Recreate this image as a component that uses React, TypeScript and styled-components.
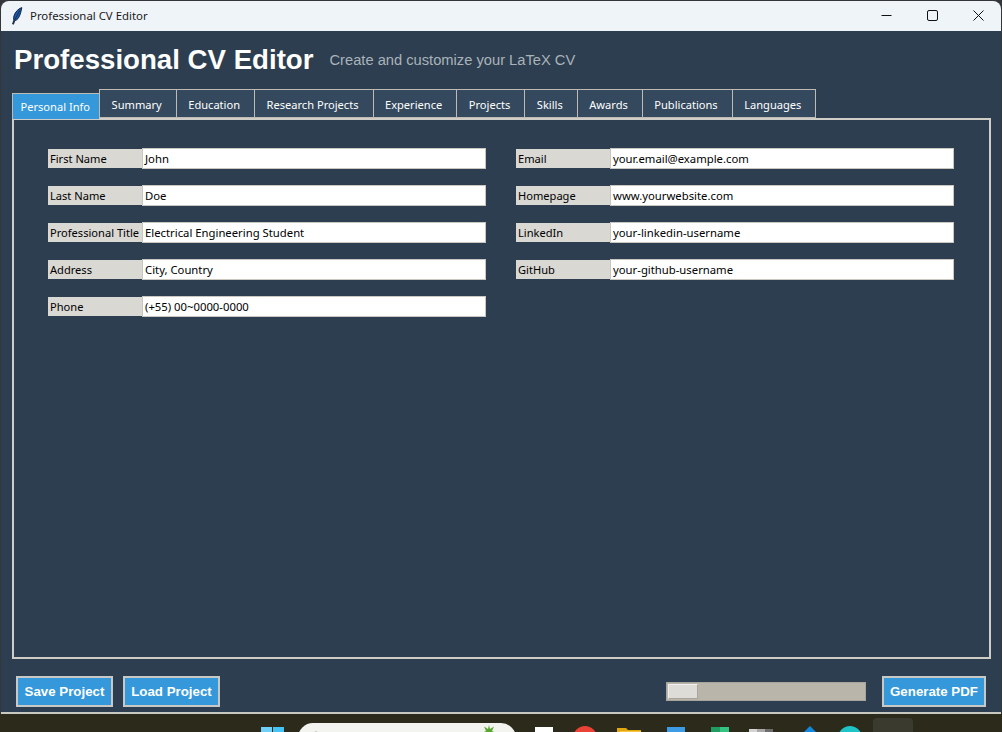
import styled, { createGlobalStyle } from "styled-components"

const GlobalStyle = createGlobalStyle`
  html, body {
    margin: 0;
    padding: 0;
    background: #35363a;
  }
`

const tabNames = [
  "Personal Info",
  "Summary",
  "Education",
  "Research Projects",
  "Experience",
  "Projects",
  "Skills",
  "Awards",
  "Publications",
  "Languages",
]

const leftFields = [
  { label: "First Name", value: "John" },
  { label: "Last Name", value: "Doe" },
  { label: "Professional Title", value: "Electrical Engineering Student" },
  { label: "Address", value: "City, Country" },
  { label: "Phone", value: "(+55) 00~0000-0000" },
]

const rightFields = [
  { label: "Email", value: "your.email@example.com" },
  { label: "Homepage", value: "www.yourwebsite.com" },
  { label: "LinkedIn", value: "your-linkedin-username" },
  { label: "GitHub", value: "your-github-username" },
]

const Desktop = styled.div`
  width: 1002px;
  height: 732px;
  overflow: hidden;
  display: flex;
  flex-direction: column;
  background: #35363a;
`

const Window = styled.div`
  width: 1000px;
  height: 713px;
  margin: 1px 0 0 1px;
  flex: none;
  display: flex;
  flex-direction: column;
  border-radius: 8px 8px 0 0;
  overflow: hidden;
  background: #2c3e50;
  border-bottom: 2px solid #c8c8c0;
  box-sizing: border-box;
`

const TitleBar = styled.div`
  height: 30px;
  flex: none;
  display: flex;
  align-items: center;
  background: #eff4f9;
`

const AppIcon = styled.svg`
  width: 14px;
  height: 18px;
  margin-left: 9px;
  margin-right: 6px;
`

const WindowTitle = styled.span`
  flex: 1;
  padding-bottom: 1px;
  font-family: "Noto Sans", sans-serif;
  font-size: 11.4px;
  color: #1a1a1a;
`

const WindowControl = styled.div`
  width: 46px;
  height: 30px;
  padding-bottom: 2px;
  box-sizing: border-box;
  display: flex;
  align-items: center;
  justify-content: center;
`

const Content = styled.div`
  flex: 1;
  display: flex;
  flex-direction: column;
  padding: 0 10px 0 11px;
  min-height: 0;
`

const Header = styled.div`
  height: 58px;
  display: flex;
  align-items: center;
  padding: 0 2px;
  flex: none;
`

const AppTitle = styled.h1`
  margin: 0;
  font-family: "Liberation Sans", Arial, sans-serif;
  font-size: 27.65px;
  font-weight: bold;
  color: #ffffff;
`

const Subtitle = styled.span`
  margin-left: 16px;
  font-family: "Liberation Sans", Arial, sans-serif;
  font-size: 14.7px;
  color: #aab3b9;
`

const TabStrip = styled.div`
  display: flex;
  align-items: flex-end;
  height: 30px;
  margin-bottom: -1px;
  flex: none;
  position: relative;
  z-index: 1;
`

const Tab = styled.div<{ $active?: boolean }>`
  box-sizing: border-box;
  height: ${(props) => (props.$active ? "26px" : "29px")};
  margin-bottom: ${(props) => (props.$active ? "0" : "1px")};
  padding: ${(props) => (props.$active ? "0 9px 0 7.5px" : "1.5px 14px 0 11.5px")};
  display: flex;
  align-items: center;
  justify-content: center;
  font-family: "Noto Sans", sans-serif;
  font-size: 11.1px;
  color: #ffffff;
  background: ${(props) => (props.$active ? "#3498db" : "#34495e")};
  border: 1px solid #bdbbb3;
  border-bottom: ${(props) => (props.$active ? "none" : "1px solid #bdbbb3")};
  border-right: ${(props) => (props.$active ? "none" : "1px solid #bdbbb3")};
  margin-left: ${(props) => (props.$active ? "0" : "-1px")};
  &:nth-child(2) {
    margin-left: 0;
  }
`

const Panel = styled.div`
  height: 541px;
  flex: none;
  box-sizing: border-box;
  border: 2px solid #cfcdc6;
  padding: 28px 34px;
  display: flex;
  gap: 30px;
  align-items: flex-start;
`

const Column = styled.div`
  width: 438px;
  display: flex;
  flex-direction: column;
  gap: 16px;
  flex: none;
`

const FieldRow = styled.div`
  display: flex;
  height: 21px;
`

const FieldLabel = styled.div`
  width: 94px;
  margin: 1px 0;
  flex: none;
  box-sizing: border-box;
  padding-left: 2px;
  display: flex;
  align-items: center;
  background: #d9d8d3;
  font-family: "Noto Sans", sans-serif;
  font-size: 11.1px;
  color: #000000;
  white-space: nowrap;
`

const FieldInput = styled.div`
  flex: 1;
  box-sizing: border-box;
  padding-left: 2px;
  display: flex;
  align-items: center;
  background: #ffffff;
  border: 1px solid #c9c7c0;
  font-family: "Noto Sans", sans-serif;
  font-size: 11.3px;
  color: #000000;
  white-space: nowrap;
`

const Footer = styled.div`
  flex: 1;
  display: flex;
  align-items: flex-start;
  padding: 17px 5px 0 4px;
  min-height: 0;
`

const ActionButton = styled.div<{ $width: number }>`
  box-sizing: border-box;
  height: 31px;
  width: ${(props) => props.$width}px;
  display: flex;
  align-items: center;
  justify-content: center;
  font-family: "Liberation Sans", Arial, sans-serif;
  font-size: 13.3px;
  font-weight: bold;
  color: #ffffff;
  background: #3498db;
  border: 2px solid #c8c8c4;
  margin-right: 10px;
  white-space: nowrap;
`

const Spacer = styled.div`
  flex: 1;
`

const ProgressTrack = styled.div`
  width: 200px;
  height: 19px;
  margin: 6px 16px 0 0;
  box-sizing: border-box;
  border: 1px solid #a8a59c;
  background: #b9b5aa;
  padding: 1px;
  display: flex;
`

const ProgressThumb = styled.div`
  width: 30px;
  box-sizing: border-box;
  background: #dddcd7;
  border: 1px solid #a8a59c;
  border-top-color: #f0efec;
  border-left-color: #f0efec;
`

const GenerateButton = styled(ActionButton)`
  margin-right: 0;
`

const Taskbar = styled.div`
  flex: 1;
  display: flex;
  align-items: flex-start;
  padding-left: 261px;
  overflow: hidden;
  background: #2c2a1a;
`

const TaskIcon = styled.svg<{ $gap: number; $top: number }>`
  flex: none;
  margin-left: ${(props) => props.$gap}px;
  margin-top: ${(props) => props.$top}px;
`

const SearchBox = styled.div`
  flex: none;
  width: 218px;
  height: 30px;
  margin: 9px 0 0 14px;
  box-sizing: border-box;
  padding: 2px 20px 0 11px;
  display: flex;
  justify-content: space-between;
  border-radius: 15px;
  background: #f3f3f0;
`

const ActiveSlot = styled.div`
  flex: none;
  width: 40px;
  height: 30px;
  margin: 4px 0 0 11px;
  box-sizing: border-box;
  padding: 11px 0 0 9px;
  border-radius: 4px;
  background: #3a3a2e;
`

export default function App() {
  return (
    <Desktop>
      <GlobalStyle />
      <Window>
        <TitleBar>
          <AppIcon viewBox="0 0 14 18">
            <path d="M11.8 0.6C8.6 1.4 5.2 5 4 8.8C3.4 10.8 3.4 12.2 3.8 13.2L2.6 17L3.5 17.2L4.8 13.6C7.4 13.2 9.2 10.4 10.2 7.2C10.9 4.8 11.6 2.6 11.8 0.6Z" fill="#1d5aa8" stroke="#0d1a33" strokeWidth="0.9" />
            <path d="M9.8 3.4L4.6 13" stroke="#0d1a33" strokeWidth="0.7" fill="none" />
          </AppIcon>
          <WindowTitle>Professional CV Editor</WindowTitle>
          <WindowControl>
            <svg width="11" height="11" viewBox="0 0 11 11">
              <path d="M0.5 5.5H10.5" stroke="#111" strokeWidth="1" fill="none" />
            </svg>
          </WindowControl>
          <WindowControl>
            <svg width="11" height="11" viewBox="0 0 11 11">
              <rect x="0.5" y="0.5" width="10" height="10" rx="1.5" stroke="#111" strokeWidth="1" fill="none" />
            </svg>
          </WindowControl>
          <WindowControl>
            <svg width="11" height="11" viewBox="0 0 11 11">
              <path d="M0.5 0.5L10.5 10.5M10.5 0.5L0.5 10.5" stroke="#111" strokeWidth="1" fill="none" />
            </svg>
          </WindowControl>
        </TitleBar>
        <Content>
          <Header>
            <AppTitle>Professional CV Editor</AppTitle>
            <Subtitle>Create and customize your LaTeX CV</Subtitle>
          </Header>
          <TabStrip>
            {tabNames.map((name, i) => (
              <Tab key={name} $active={i === 0}>
                {name}
              </Tab>
            ))}
          </TabStrip>
          <Panel>
            <Column>
              {leftFields.map((f) => (
                <FieldRow key={f.label}>
                  <FieldLabel>{f.label}</FieldLabel>
                  <FieldInput>{f.value}</FieldInput>
                </FieldRow>
              ))}
            </Column>
            <Column>
              {rightFields.map((f) => (
                <FieldRow key={f.label}>
                  <FieldLabel>{f.label}</FieldLabel>
                  <FieldInput>{f.value}</FieldInput>
                </FieldRow>
              ))}
            </Column>
          </Panel>
          <Footer>
            <ActionButton $width={97}>Save Project</ActionButton>
            <ActionButton $width={97}>Load Project</ActionButton>
            <Spacer />
            <ProgressTrack>
              <ProgressThumb />
            </ProgressTrack>
            <GenerateButton $width={104}>Generate PDF</GenerateButton>
          </Footer>
        </Content>
      </Window>
      <Taskbar>
        {/* the dock is cut off by the bottom of the screenshot */}
        <TaskIcon width="23" height="12" viewBox="0 0 23 12" $gap={0} $top={13}>
          <rect x="0" y="0" width="11" height="12" fill="#6fd0f7" />
          <rect x="12" y="0" width="11" height="12" fill="#45c3f5" />
        </TaskIcon>
        <SearchBox>
          <svg width="14" height="14" viewBox="0 0 14 14">
            <circle cx="7" cy="12" r="4.5" stroke="#333" strokeWidth="1.6" fill="none" />
          </svg>
          <svg width="14" height="14" viewBox="0 0 14 14">
            <path d="M7 0L8 4L12 1.5L10 6L14 8L9.5 9L10 14H4L4.5 9L0 8L4 6L2 1.5L6 4Z" fill="#5aa832" />
          </svg>
        </SearchBox>
        <TaskIcon width="18" height="10" viewBox="0 0 18 10" $gap={19} $top={13}>
          <rect width="18" height="10" fill="#ffffff" />
        </TaskIcon>
        <TaskIcon width="24" height="12" viewBox="0 0 24 12" $gap={20} $top={12}>
          <circle cx="12" cy="12" r="12" fill="#ea4335" />
        </TaskIcon>
        <TaskIcon width="24" height="10" viewBox="0 0 24 10" $gap={20} $top={14}>
          <path d="M0 0H9L11 2H24V10H0Z" fill="#e3a70f" />
          <rect x="3" y="3" width="21" height="7" fill="#f6c945" />
        </TaskIcon>
        <TaskIcon width="18" height="11" viewBox="0 0 18 11" $gap={26} $top={13}>
          <rect width="18" height="11" fill="#3c9ce6" />
        </TaskIcon>
        <TaskIcon width="18" height="11" viewBox="0 0 18 11" $gap={26} $top={13}>
          <rect width="9" height="11" fill="#1f9d63" />
          <rect x="9" width="9" height="11" fill="#33c481" />
        </TaskIcon>
        <TaskIcon width="24" height="8" viewBox="0 0 24 8" $gap={20} $top={15}>
          <rect width="8" height="8" fill="#d4d4d4" />
          <rect x="8" width="8" height="8" fill="#a8a8a8" />
          <rect x="16" width="8" height="8" fill="#6d6d6d" />
        </TaskIcon>
        <TaskIcon width="16" height="12" viewBox="0 0 16 12" $gap={29} $top={12}>
          <path d="M8 0L16 8V12H0V8Z" fill="#0f8ae0" />
        </TaskIcon>
        <TaskIcon width="24" height="12" viewBox="0 0 24 12" $gap={20} $top={12}>
          <circle cx="12" cy="12" r="12" fill="#1fc4c9" />
        </TaskIcon>
        <ActiveSlot>
          <svg width="22" height="9" viewBox="0 0 22 9">
            <rect width="22" height="9" fill="#2d5f8f" />
            <rect y="2" width="22" height="7" fill="#2c3e50" />
          </svg>
        </ActiveSlot>
      </Taskbar>
    </Desktop>
  )
}
